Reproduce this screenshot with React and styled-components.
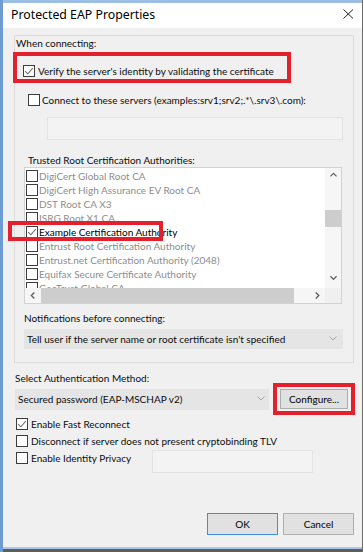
import React from 'react';
import styled, { createGlobalStyle } from 'styled-components';

const GlobalStyle = createGlobalStyle`
  html, body {
    margin: 0;
    padding: 0;
    background: #f0f0f0;
  }
  body {
    font-family: Lato, "Noto Sans", sans-serif;
    font-size: 10px;
    color: #0c0c0c;
  }
  *, *::before, *::after {
    box-sizing: border-box;
  }
`;

const Window = styled.div`
  width: 363px;
  height: 552px;
  display: flex;
  flex-direction: column;
  border-left: 3px solid #6d9cd5;
  border-right: 1px solid #6b6b6b;
  background: #f0f0f0;
  overflow: hidden;
`;

const TopStrip = styled.div`
  height: 3px;
  background: #9dbfe6;
`;

const TitleBar = styled.div`
  height: 25px;
  display: flex;
  align-items: center;
  justify-content: space-between;
  padding: 0 8px 3px 8px;
  background: #fff;
`;

const Title = styled.span`
  font-family: "Noto Sans", sans-serif;
  font-size: 12.3px;
  color: #000;
`;

const Body = styled.div`
  flex: 1;
  display: flex;
  flex-direction: column;
  align-items: flex-start;
  padding: 7px 8px 12px 11px;
`;

const BottomEdge = styled.div`
  height: 5px;
  background: linear-gradient(#a9c6e8 0 2px, #5c5c5c 2px);
`;

const Panel = styled.div`
  width: 340px;
  height: 328px;
  border: 1px solid #dcdcdc;
  display: flex;
  flex-direction: column;
  align-items: flex-start;
`;

const Label = styled.div`
  line-height: 14px;
  white-space: nowrap;
  margin-top: ${(p) => p.$top || 0}px;
  margin-left: ${(p) => p.$left || 0}px;
`;

const Callout = styled.div`
  flex: none;
  border: 4px solid #e3202c;
  width: ${(p) => p.$w}px;
  height: ${(p) => p.$h}px;
`;

const VerifyCallout = styled(Callout)`
  margin: 2px 0 0 -2px;
  padding: 9px 0 0 6px;
`;

const ButtonCallout = styled(Callout)`
  padding: 2px 3px;
`;

const CheckRow = styled.div`
  display: flex;
  align-items: center;
  gap: ${(p) => (p.$gap === undefined ? 3 : p.$gap)}px;
  height: ${(p) => p.$h || 12}px;
  white-space: nowrap;
  margin-top: ${(p) => p.$top || 0}px;
  margin-left: ${(p) => p.$left || 0}px;
`;

const Box = styled.span`
  flex: none;
  width: 12px;
  height: 12px;
  border: 1px solid #3c3c3c;
  background: #fff;
  display: flex;
  align-items: center;
  justify-content: center;
`;

const TextField = styled.div`
  flex: none;
  width: ${(p) => p.$w}px;
  height: 23px;
  border: 1px solid #e3e3e3;
  background: #f3f3f3;
  margin-top: ${(p) => p.$top || 0}px;
  margin-left: ${(p) => p.$left || 0}px;
`;

const ListBox = styled.div`
  position: relative;
  flex: none;
  margin-left: 9px;
  width: 318px;
  height: 137px;
  border: 1px solid #d2d2d2;
  background: #fff;
  display: grid;
  grid-template-columns: 1fr 16px;
  grid-template-rows: 1fr 15px;
`;

const Viewport = styled.div`
  overflow: hidden;
  padding-top: 1px;
`;

const ListRow = styled.div`
  display: flex;
  align-items: center;
  gap: 1px;
  height: 14px;
  padding-left: 1px;
  white-space: nowrap;
  color: ${(p) => (p.$muted ? '#8e8e8e' : '#000')};
`;

const Highlight = styled.div`
  position: absolute;
  left: -17px;
  top: ${(p) => 1 + p.$row * 14 - 4}px;
  width: 155px;
  height: 20px;
  border: 4px solid #e3202c;
  pointer-events: none;
`;

const VScroll = styled.div`
  display: flex;
  flex-direction: column;
  background: #f6f6f6;
  padding-bottom: 2px;
`;

const HScroll = styled.div`
  display: flex;
  background: #f6f6f6;
`;

const Arrow = styled.div`
  flex: none;
  width: 16px;
  height: 15px;
  display: flex;
  align-items: center;
  justify-content: center;
  margin-top: ${(p) => (p.$end ? 'auto' : 0)};
  margin-left: ${(p) => (p.$endX ? 'auto' : 0)};
`;

const Thumb = styled.div`
  flex: none;
  background: #cdcdcd;
  width: ${(p) => p.$w || 16}px;
  height: ${(p) => p.$h || 15}px;
  margin-top: ${(p) => p.$top || 0}px;
`;

const Corner = styled.div`
  background: #f0f0f0;
`;

const Select = styled.div`
  flex: none;
  display: flex;
  align-items: center;
  justify-content: space-between;
  width: ${(p) => p.$w}px;
  height: ${(p) => p.$h}px;
  padding: 0 ${(p) => p.$pr}px 0 3px;
  background: #e5e5e5;
  white-space: nowrap;
  margin-top: ${(p) => p.$top || 0}px;
  margin-left: ${(p) => p.$left || 0}px;
`;

const MethodRow = styled.div`
  display: flex;
  align-items: center;
  gap: 4px;
  margin-top: -2px;
`;

const Button = styled.button`
  flex: none;
  width: ${(p) => p.$w}px;
  height: ${(p) => p.$h}px;
  padding: 0;
  font: inherit;
  color: #000;
  background: #e1e1e1;
  border: 1px solid ${(p) => (p.$default ? '#3d8ee0' : '#adadad')};
`;

const Options = styled.div`
  display: flex;
  flex-direction: column;
  margin-left: 2px;
`;

const IdentityRow = styled.div`
  display: grid;
  grid-template-columns: 136px 161px;
  align-items: start;
`;

const Footer = styled.div`
  align-self: stretch;
  display: flex;
  justify-content: flex-end;
  gap: 5px;
  margin-top: auto;
`;

const Check = ({ checked }) => (
  <Box>
    {checked && (
      <svg width="10" height="10" viewBox="0 0 10 10">
        <polyline points="1.2,5.2 3.8,7.8 8.8,2.2" fill="none" stroke="#6e6e6e" strokeWidth="1.1" />
      </svg>
    )}
  </Box>
);

const Chevron = ({ dir, color = '#5f5f5f', size = 7, width = 1.5 }) => {
  const pts = {
    up: '0.5,5 4,1.5 7.5,5',
    down: '0.5,1.5 4,5 7.5,1.5',
    left: '5,0.5 1.5,4 5,7.5',
    right: '2,0.5 5.5,4 2,7.5',
  }[dir];
  return (
    <svg width={size} height={size} viewBox="0 0 8 8">
      <polyline points={pts} fill="none" stroke={color} strokeWidth={width} />
    </svg>
  );
};

const authorities = [
  { name: 'DigiCert Global Root CA', muted: true },
  { name: 'DigiCert High Assurance EV Root CA', muted: true },
  { name: 'DST Root CA X3', muted: true },
  { name: 'ISRG Root X1 CA', muted: true },
  { name: 'Example Certification Authority', checked: true },
  { name: 'Entrust Root Certification Authority', muted: true },
  { name: 'Entrust.net Certification Authority (2048)', muted: true },
  { name: 'Equifax Secure Certificate Authority', muted: true },
  { name: 'GeoTrust Global CA', muted: true },
];

export default function App() {
  return (
    <>
      <GlobalStyle />
      <Window>
        <TopStrip />
        <TitleBar>
          <Title>Protected EAP Properties</Title>
          <svg width="11" height="10" viewBox="0 0 11 10">
            <path d="M0.5 0.5 L10 9.5 M10 0.5 L0.5 9.5" stroke="#222" strokeWidth="1" />
          </svg>
        </TitleBar>
        <Body>
          <Panel>
            <Label $left={1}>When connecting:</Label>
            <VerifyCallout $w={278} $h={31}>
              <CheckRow>
                <Check checked />
                Verify the server's identity by validating the certificate
              </CheckRow>
            </VerifyCallout>
            <CheckRow $top={11} $left={13} $gap={2}>
              <Check />
              Connect to these servers (examples:srv1;srv2;.*\.srv3\.com):
            </CheckRow>
            <TextField $w={296} $top={11} $left={32} />
            <Label $top={13} $left={13}>Trusted Root Certification Authorities:</Label>
            <ListBox>
              <Viewport>
                {authorities.map((a) => (
                  <ListRow key={a.name} $muted={a.muted}>
                    <Check checked={a.checked} />
                    {a.name}
                  </ListRow>
                ))}
              </Viewport>
              <VScroll>
                <Arrow>
                  <Chevron dir="up" />
                </Arrow>
                <Thumb $top={27} $h={17} />
                <Arrow $end>
                  <Chevron dir="down" />
                </Arrow>
              </VScroll>
              <HScroll>
                <Arrow>
                  <Chevron dir="left" />
                </Arrow>
                <Thumb $w={253} />
                <Arrow $endX>
                  <Chevron dir="right" />
                </Arrow>
              </HScroll>
              <Corner />
              <Highlight $row={4} />
            </ListBox>
            <Label $top={7} $left={9}>Notifications before connecting:</Label>
            <Select $w={319} $h={20} $pr={6} $top={4} $left={9}>
              Tell user if the server name or root certificate isn't specified
              <Chevron dir="down" color="#a6a6a6" size={8} width={1} />
            </Select>
          </Panel>
          <Label $top={8} $left={1}>Select Authentication Method:</Label>
          <MethodRow>
            <Select $w={254} $h={21} $pr={4} $left={1}>
              Secured password (EAP-MSCHAP v2)
              <Chevron dir="down" color="#a6a6a6" size={8} width={1} />
            </Select>
            <ButtonCallout $w={82} $h={32}>
              <Button $w={68} $h={20}>Configure...</Button>
            </ButtonCallout>
          </MethodRow>
          <Options>
            <CheckRow $h={17}>
              <Check checked />
              Enable Fast Reconnect
            </CheckRow>
            <CheckRow $h={17}>
              <Check />
              Disconnect if server does not present cryptobinding TLV
            </CheckRow>
            <IdentityRow>
              <CheckRow $h={17}>
                <Check />
                Enable Identity Privacy
              </CheckRow>
              <TextField $w={161} $top={1} />
            </IdentityRow>
          </Options>
          <Footer>
            <Button $default $w={71} $h={22}>OK</Button>
            <Button $w={71} $h={22}>Cancel</Button>
          </Footer>
        </Body>
        <BottomEdge />
      </Window>
    </>
  );
}
